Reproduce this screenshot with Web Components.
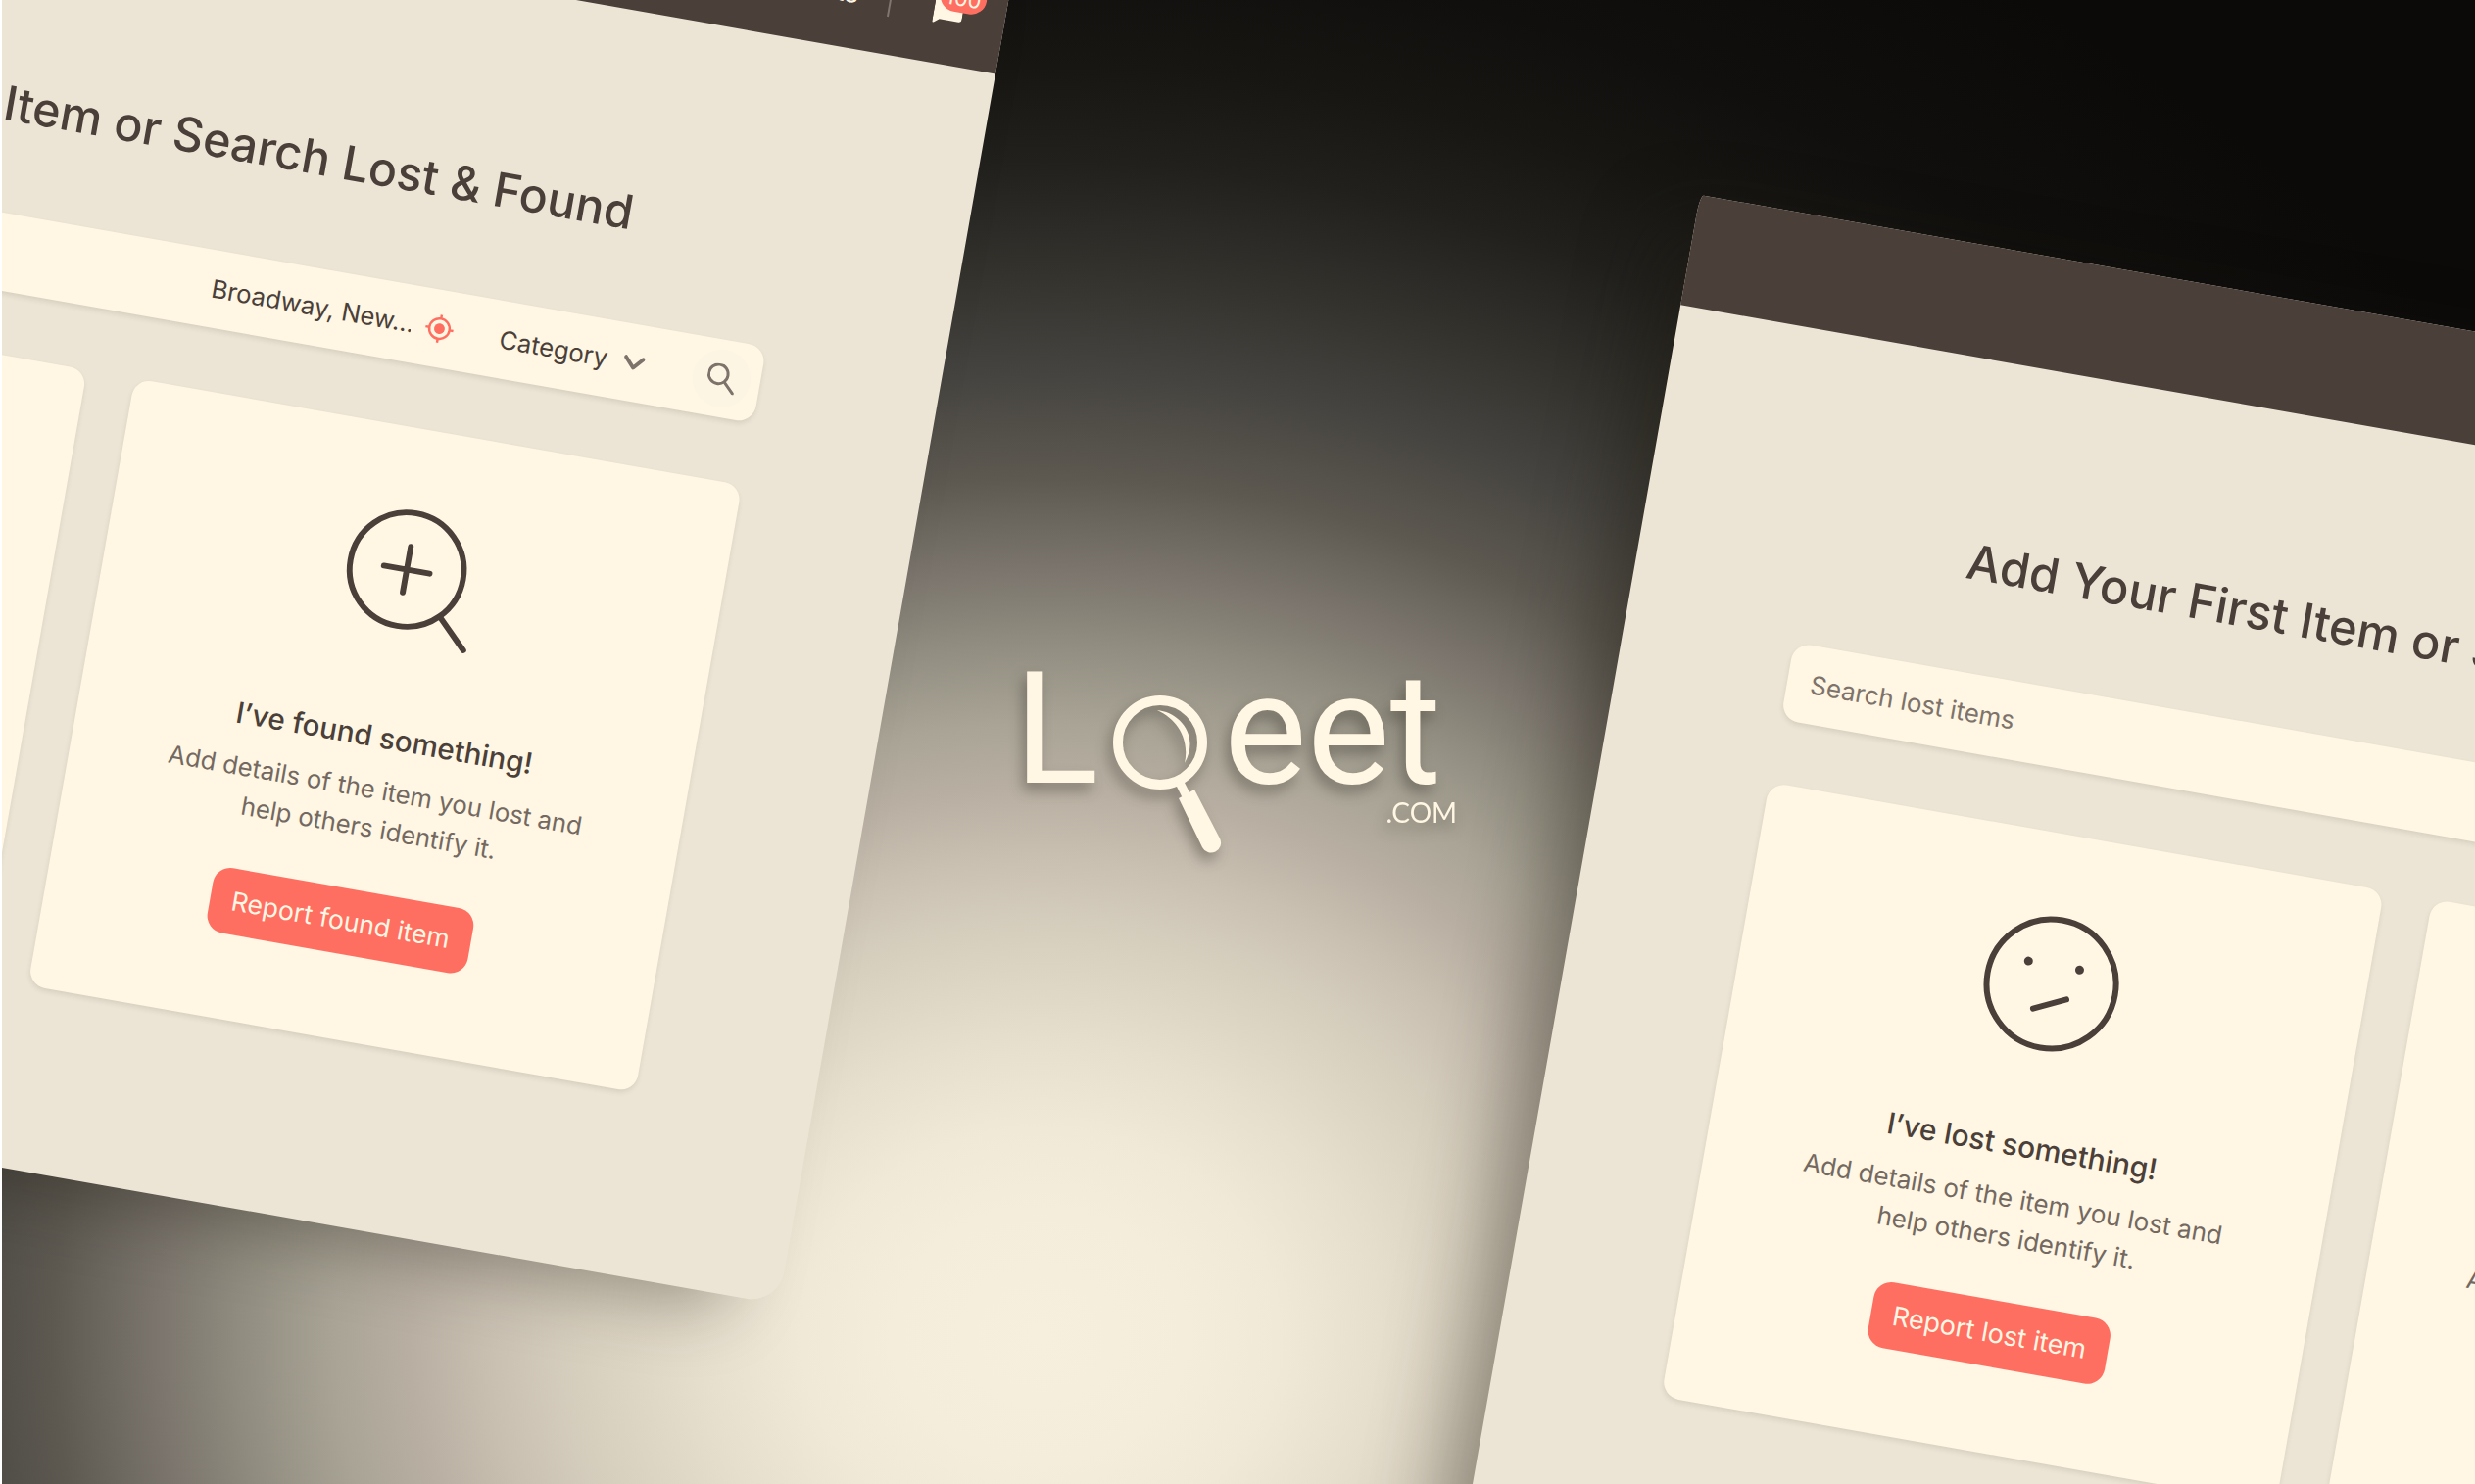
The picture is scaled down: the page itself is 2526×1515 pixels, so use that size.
<!DOCTYPE html>
<html lang="en">
<head>
<meta charset="utf-8">
<title>Loeet.com</title>
<style>
  html, body { height: 100%; margin: 0; }
  body { font-family: Inter, "Liberation Sans", sans-serif; color: #4a3f39; background: #fff; overflow: hidden; }
</style>
</head>
<body>
<loeet-stage>
  <app-window class="near"></app-window>
  <loeet-logo></loeet-logo>
  <app-window class="far"></app-window>
</loeet-stage>

<template id="t-stage">
  <style>
    :host {
      display: grid; place-items: center; position: relative; box-sizing: border-box;
      height: 100vh; overflow: hidden; border-left: 2px solid #fff; padding-top: 28px;
      background: radial-gradient(ellipse 74% 107% at 42% 90%,
        #f6efdd 0%, #f4eddb 8%, #f0e9d8 13%, #e7dfce 18.5%, #d9d1c0 24.5%, #c9c0b2 30%,
        #b8afa2 34.5%, #a9a496 38.5%, #8f8b7e 44%, #7c766e 48%, #5d5951 54%, #464440 60.5%,
        #33322d 67%, #21201d 74%, #171613 80%, #100f0d 87%, #0b0a09 100%) padding-box;
    }
    ::slotted(app-window) {
      position: absolute; left: var(--x); top: var(--y); transform-origin: 0 0;
      rotate: 10deg;
    }
    ::slotted(.near) { --x: -603px; --y: -324px; scale: .988; --cast: -50px 22px 70px -4px rgba(30, 24, 16, .34); }
    ::slotted(.far) { --x: 1733px; --y: 199px; --cast: -34px 22px 80px -6px rgba(30, 24, 16, .4); }
  </style>
  <slot></slot>
</template>

<template id="t-logo">
  <style>
    :host {
      display: flex; align-items: flex-start; margin-right: 22px;
      color: #fff6e4; filter: drop-shadow(-4px 8px 7px rgba(40, 34, 26, .36));
    }
    .big { font: 400 160px/144px Roboto, "Noto Sans", sans-serif; }
    .tail { display: flex; flex-direction: column; align-items: flex-end; margin-left: 2px; }
    .com { font: 400 28px/24px Lato, sans-serif; margin-right: -16px; }
    svg { width: 112px; height: 162px; margin: 36px 0 0 14px; }
  </style>
  <span class="big">L</span>
  <svg viewBox="0 0 112 162" fill="none" aria-hidden="true">
    <circle cx="49" cy="49" r="43" stroke="#fff6e4" stroke-width="10"/>
    <path d="M46 16c22 2 44 25 28 54 5-23-6-44-28-54z" fill="#fff6e4"/>
    <path d="M69 90l8 16" stroke="#fff6e4" stroke-width="9"/>
    <path d="M68 106l16-9 26 50a10 10 0 0 1-18 9z" fill="#fff6e4"/>
  </svg>
  <div class="tail"><span class="big">eet</span><span class="com">.COM</span></div>
</template>

<template id="t-window">
  <style>
    :host {
      display: block; width: 1682px; overflow: visible; background: #ece5d5;
      border-radius: 4px 20px 34px 34px / 20px 4px 34px 34px;
      box-shadow: var(--cast);
    }
    header {
      display: flex; align-items: center; justify-content: flex-end; box-sizing: border-box;
      height: 114px; padding-right: 44px; background: #4a3f39; color: #fff6e4; font-size: 28px;
      border-radius: 4px 20px 0 0 / 20px 4px 0 0;
    }
    header a { color: inherit; text-decoration: none; }
    header i { width: 2px; height: 36px; margin: 0 45px 0 32px; background: #82766f; }
    .chat { position: relative; display: block; border: 0; padding: 0; background: none; width: 30px; height: 32px; }
    .chat svg { display: block; width: 30px; height: 32px; }
    .chat b {
      position: absolute; left: 4px; top: -15px; width: 48px; height: 32px; border-radius: 16px;
      background: #ff6f61; color: #fff6e4; font: 400 22px/34px Inter, sans-serif; text-align: center;
    }
    main { padding: 59px 184px 190px 174px; display: flex; flex-direction: column; }
    h1 { margin: 116px 0 80px; font-size: 49px; line-height: 64px; font-weight: 500; text-align: center; white-space: nowrap; }
    .cards { display: grid; grid-template-columns: 1fr 1fr; gap: 50px; margin-top: 65px; }
  </style>
  <header>
    <a href="#alerts">Alerts</a><i></i>
    <button class="chat" aria-label="Messages">
      <svg viewBox="0 0 30 32" fill="#fff6e4" aria-hidden="true"><path d="M3 1h24a3 3 0 0 1 3 3v20a3 3 0 0 1-3 3H7l-5 4q-2 1-2-1V4a3 3 0 0 1 3-3z"/></svg>
      <b>100</b>
    </button>
  </header>
  <main>
    <h1>Add Your First Item or Search Lost &amp; Found</h1>
    <search-bar></search-bar>
    <div class="cards">
      <action-card class="lost">
        <svg slot="icon" viewBox="-75 -75 150 150" fill="none" stroke="#4a3f39" stroke-width="6" stroke-linecap="round" aria-hidden="true">
          <circle r="66"/><path d="M-14 28L18 13"/>
          <g fill="#4a3f39" stroke="none"><circle cx="-27" cy="-19" r="4.500"/><circle cx="26" cy="-19" r="4.500"/></g>
        </svg>
        <span slot="title">I’ve lost something!</span>
        <span slot="text">Add details of the item you lost and help others identify it.</span>
        <span slot="action">Report lost item</span>
      </action-card>
      <action-card class="found">
        <svg slot="icon" viewBox="-75 -75 150 150" fill="none" stroke="#4a3f39" stroke-width="6" stroke-linecap="round" aria-hidden="true">
          <circle cx="-8" cy="-7" r="59"/><path d="M-32 -7H16M-8 -31V17M34 35L64 65"/>
        </svg>
        <span slot="title">I’ve found something!</span>
        <span slot="text">Add details of the item you lost and help others identify it.</span>
        <span slot="action">Report found item</span>
      </action-card>
    </div>
  </main>
</template>

<template id="t-search">
  <style>
    :host {
      display: flex; align-items: center; height: 80px; border-radius: 18px;
      background: #fff6e4; box-shadow: 0 3px 5px rgba(74, 63, 57, .12);
    }
    input, select {
      font: 400 26px/40px Inter, "Liberation Sans", sans-serif; color: #4a3f39; background: none;
      border: 0; padding: 0; margin: 0; outline: 0; appearance: none;
    }
    .q { flex: 1; min-width: 0; margin-left: 24px; }
    .q::placeholder { color: #7d736a; opacity: 1; }
    .place { width: 210px; }
    .target { width: 30px; height: 30px; margin: 0 48px 0 14px; }
    .chev { width: 22px; height: 22px; margin: 0 51px 0 16px; }
    button {
      display: grid; place-items: center; width: 60px; height: 60px; margin-right: 10px;
      padding: 0; border: 0; border-radius: 50%; background: #fdf5e3;
    }
    button svg { width: 30px; height: 30px; }
  </style>
  <input class="q" type="search" placeholder="Search lost items" aria-label="Search lost items">
  <input class="place" type="text" value="Broadway, New..." aria-label="Location">
  <svg class="target" viewBox="-15 -15 30 30" fill="none" stroke="#ff6f61" stroke-width="2.500" aria-hidden="true">
    <circle r="10.500"/><circle r="5.500" fill="#ff6f61" stroke="none"/><path d="M0-14.500v4M0 10.500v4M-14.500 0h4M10.500 0h4"/>
  </svg>
  <select aria-label="Category"><option>Category</option></select>
  <svg class="chev" viewBox="-11 -11 22 22" fill="none" stroke="#7d736a" stroke-width="4" stroke-linecap="round" stroke-linejoin="round" aria-hidden="true"><path d="M-9-5L0 5 9-5"/></svg>
  <button aria-label="Search">
    <svg viewBox="-15 -15 30 30" fill="none" stroke="#7d736a" stroke-width="3" stroke-linecap="round" aria-hidden="true"><circle cx="-4" cy="-4" r="10"/><path d="M4 4L14 14"/></svg>
  </button>
</template>

<template id="t-card">
  <style>
    :host {
      display: flex; flex-direction: column; align-items: center; padding: 78px 24px 88px;
      border-radius: 18px; background: #fff6e4; box-shadow: 0 3px 5px rgba(74, 63, 57, .12); text-align: center;
    }
    ::slotted(svg) { display: block; width: 150px; height: 150px; }
    h2 { margin: 73px 0 15px; font-size: 30px; line-height: 40px; font-weight: 500; }
    p { margin: 0 0 45px; width: 460px; font-size: 26px; line-height: 40px; color: #736961; }
    button {
      height: 68px; padding: 0 22px; border: 0; border-radius: 18px; background: #ff6f61; color: #fff6e4;
      font: 400 27px/68px Inter, "Liberation Sans", sans-serif;
    }
    :host(.found) button { margin-right: 24px; }
  </style>
  <slot name="icon"></slot>
  <h2><slot name="title"></slot></h2>
  <p><slot name="text"></slot></p>
  <button><slot name="action"></slot></button>
</template>

<script>
  const define = (name, id) => customElements.define(name, class extends HTMLElement {
    constructor() {
      super();
      this.attachShadow({ mode: 'open' }).append(document.getElementById(id).content.cloneNode(true));
    }
  });
  define('action-card', 't-card');
  define('search-bar', 't-search');
  define('app-window', 't-window');
  define('loeet-logo', 't-logo');
  define('loeet-stage', 't-stage');
</script>
</body>
</html>
